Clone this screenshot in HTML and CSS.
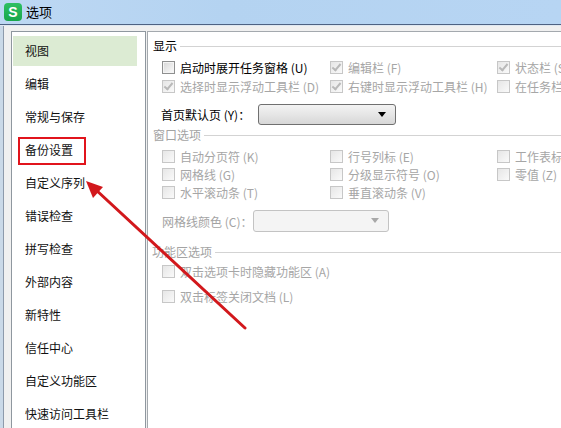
FILE: index.html
```html
<!DOCTYPE html>
<html lang="zh-CN">
<head>
<meta charset="utf-8">
<title>选项</title>
<link rel="stylesheet" href="styles.css">
</head>
<body>
<div class="titlebar">
  <div class="app-icon">S</div>
  <div class="title">选项</div>
</div>
<div class="window">
  <ul class="nav">
    <li class="nav-item sel">视图</li>
    <li class="nav-item">编辑</li>
    <li class="nav-item">常规与保存</li>
    <li class="nav-item">备份设置</li>
    <li class="nav-item">自定义序列</li>
    <li class="nav-item">错误检查</li>
    <li class="nav-item">拼写检查</li>
    <li class="nav-item">外部内容</li>
    <li class="nav-item">新特性</li>
    <li class="nav-item">信任中心</li>
    <li class="nav-item">自定义功能区</li>
    <li class="nav-item">快速访问工具栏</li>
  </ul>
  <div class="content">
    <div class="group-head g1"><span>显示</span><i class="rule"></i></div>
    <div class="grid grid-show">
      <label class="opt"><span class="cb"></span>启动时展开任务窗格 (U)</label>
      <label class="opt dis"><span class="cb on"></span>编辑栏 (F)</label>
      <label class="opt dis"><span class="cb on"></span>状态栏 (S)</label>
      <label class="opt dis"><span class="cb on"></span>选择时显示浮动工具栏 (D)</label>
      <label class="opt dis"><span class="cb on"></span>右键时显示浮动工具栏 (H)</label>
      <label class="opt dis"><span class="cb"></span>在任务栏中显示所有窗口</label>
    </div>
    <div class="field f-home">
      <span class="field-label">首页默认页 (Y)：</span>
      <div class="select"><span class="caret"></span></div>
    </div>
    <div class="group-head g2 dis"><span>窗口选项</span><i class="rule"></i></div>
    <div class="grid grid-win">
      <label class="opt dis"><span class="cb"></span>自动分页符 (K)</label>
      <label class="opt dis"><span class="cb"></span>行号列标 (E)</label>
      <label class="opt dis"><span class="cb"></span>工作表标签</label>
      <label class="opt dis"><span class="cb"></span>网格线 (G)</label>
      <label class="opt dis"><span class="cb"></span>分级显示符号 (O)</label>
      <label class="opt dis"><span class="cb"></span>零值 (Z)</label>
      <label class="opt dis"><span class="cb"></span>水平滚动条 (T)</label>
      <label class="opt dis"><span class="cb"></span>垂直滚动条 (V)</label>
    </div>
    <div class="field f-color dis">
      <span class="field-label">网格线颜色 (C)：</span>
      <div class="select disabled"><span class="caret"></span></div>
    </div>
    <div class="group-head g3 dis"><span>功能区选项</span><i class="rule"></i></div>
    <div class="stack">
      <label class="opt dis"><span class="cb"></span>双击选项卡时隐藏功能区 (A)</label>
      <label class="opt dis"><span class="cb"></span>双击标签关闭文档 (L)</label>
    </div>
  </div>
</div>
<div class="mark-box"></div>
<svg class="mark-arrow" width="561" height="428" viewBox="0 0 561 428">
  <line x1="245" y1="328" x2="95" y2="189" stroke="#d2181c" stroke-width="3" stroke-linecap="round"/>
  <polygon points="86,181 93,198 103,187" fill="#d2181c"/>
</svg>
</body>
</html>
```
FILE: styles.css
```css
html, body {
  margin: 0;
  padding: 0;
  width: 561px;
  height: 428px;
  overflow: hidden;
}
body {
  position: relative;
  background: #f0f0f0;
  font-family: "Noto Sans CJK SC", "Liberation Sans", sans-serif;
  font-size: 12px;
  color: #000;
}
.titlebar {
  height: 24px;
  display: flex;
  align-items: center;
  background: linear-gradient(90deg, #bdd8f3 0%, #b4d3f1 40%, #b7d5f3 100%);
  border-bottom: 1px solid #4e6282;
  box-shadow: 0 1px 0 #dfe8f1;
}
.app-icon {
  width: 18px;
  height: 18px;
  margin-left: 4px;
  border-radius: 4px;
  background: linear-gradient(#2dbf62, #18a74a);
  color: #fff;
  font-family: "Liberation Sans", sans-serif;
  font-weight: bold;
  font-size: 14px;
  line-height: 18px;
  text-align: center;
}
.title {
  margin-left: 4px;
  font-size: 13px;
  line-height: 18px;
}
.window {
  display: flex;
  align-items: flex-start;
  width: 800px;
  margin-top: 1px;
  padding: 5px 0 0 7px;
  border-left: 3px solid #cad9e8;
  box-shadow: inset 1px 0 0 #8d9aab;
  height: 500px;
}
.nav {
  list-style: none;
  margin: 0 0 0 1px;
  padding: 4px 8px 0 1px;
  width: 124px;
  height: 460px;
  background: #fff;
  border: 1px solid #8f979f;
  display: flex;
  flex-direction: column;
  gap: 3px;
}
.nav-item {
  height: 30px;
  line-height: 30px;
  padding-left: 12px;
  font-size: 12px;
  color: #111;
}
.nav-item.sel {
  background: #dcebd3;
}
.content {
  margin-left: 1px;
  width: 480px;
  height: 460px;
  background: #fff;
  border: 1px solid #a4a9ae;
  padding-left: 5px;
}
.group-head {
  display: flex;
  align-items: center;
  height: 16px;
  line-height: 16px;
}
.group-head .rule {
  flex: 1;
  height: 0;
  border-top: 1px solid #d3d3d3;
  margin-left: 3px;
}
.g1 { margin-top: 6px; }
.g2 { margin-top: 2px; }
.g3 { margin-top: 12px; margin-left: -1px; }
.dis { color: #a3a3a3; }
.grid {
  display: grid;
  grid-template-columns: 168px 167px 160px;
  margin-left: 9px;
}
.grid-show { margin-top: 4px; grid-auto-rows: 19px; }
.grid-win { margin-top: 4px; grid-auto-rows: 18px; }
.stack {
  margin-left: 9px;
  display: flex;
  flex-direction: column;
  gap: 3px;
}
.stack .opt { height: 22px; }
.opt {
  display: flex;
  align-items: center;
  white-space: nowrap;
  gap: 5px;
  color: #000;
}
.opt.dis { color: #a6a6a6; }
.cb {
  position: relative;
  flex: none;
  width: 11px;
  height: 11px;
  border: 1px solid #8e8f8f;
  background: linear-gradient(135deg, #d6d6d6, #fbfbfb);
  box-shadow: inset 0 0 0 1px #f4f4f4;
}
.dis .cb {
  border-color: #c7c7c7;
  background: linear-gradient(135deg, #e6e6e6, #fafafa);
  box-shadow: none;
}
.cb.on::after {
  content: "";
  position: absolute;
  left: 3px;
  top: 0px;
  width: 3px;
  height: 7px;
  border: solid #b9b9b9;
  border-width: 0 2px 2px 0;
  transform: rotate(40deg);
}
.field {
  display: flex;
  align-items: center;
  margin-left: 8px;
}
.f-home { margin-top: 8px; height: 21px; }
.f-home .field-label { width: 97px; }
.f-color { margin-top: 9px; height: 22px; margin-left: 9px; }
.f-color .field-label { width: 91px; }
.select {
  position: relative;
  width: 136px;
  height: 19px;
  border: 1px solid #707070;
  border-radius: 3px;
  background: linear-gradient(#f3f3f3, #e6e6e6 50%, #d7d7d7);
}
.f-color .select { width: 134px; height: 20px; }
.select.disabled {
  border-color: #c3c3c3;
  background: #f4f4f4;
}
.caret {
  position: absolute;
  right: 9px;
  top: 7px;
  width: 0;
  height: 0;
  border-left: 4px solid transparent;
  border-right: 4px solid transparent;
  border-top: 5px solid #000;
}
.select.disabled .caret { border-top-color: #a8a8a8; }
.mark-box {
  position: absolute;
  left: 18px;
  top: 137px;
  width: 64px;
  height: 24px;
  border: 2px solid #e1141c;
}
.mark-arrow {
  position: absolute;
  left: 0;
  top: 0;
  pointer-events: none;
}
```
